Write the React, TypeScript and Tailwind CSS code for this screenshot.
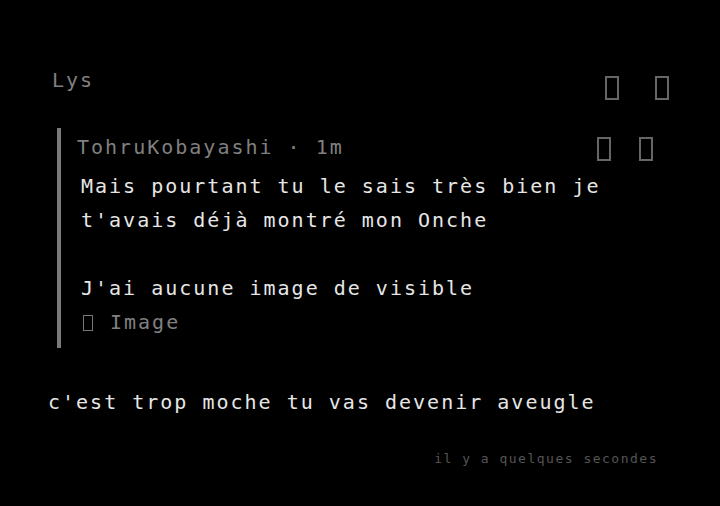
import React from "react";

function Tofu({ big = true }: { big?: boolean }) {
  return big ? (
    <span className="inline-block w-[14px] h-[24px] border-2 border-[#666]" />
  ) : (
    <span className="inline-block w-[10px] h-[16px] border border-[#777]" />
  );
}

export default function App() {
  return (
    <div
      className="w-[720px] h-[506px] bg-black overflow-hidden text-[20px] leading-[34px] tracking-[2px] text-[#e6e6e6]"
      style={{ fontFamily: '"DejaVu Sans Mono", monospace' }}
    >
      <div className="pl-[48px] pr-[51px] pt-[63px]">
        <div className="flex items-start justify-between">
          <span className="ml-[4px] text-[#808080]">Lys</span>
          <div className="flex items-center gap-[36px] mt-[13px]">
            <Tofu />
            <Tofu />
          </div>
        </div>
        <div className="mt-[28px] ml-[9px] mr-[16px] border-l-4 border-[#7a7a7a] pl-[16px] pt-[2px] pb-[9px]">
          <div className="flex items-start justify-between">
            <span className="text-[#808080]">TohruKobayashi · 1m</span>
            <div className="flex items-center gap-[28px] mt-[7px]">
              <Tofu />
              <Tofu />
            </div>
          </div>
          <div className="mt-[5px] pl-[4px]">
            <div>Mais pourtant tu le sais très bien je</div>
            <div>t'avais déjà montré mon Onche</div>
            <div>&nbsp;</div>
            <div>J'ai aucune image de visible</div>
            <div className="text-[#808080] flex items-center gap-[17px]">
              <span className="ml-[2px] mt-[2px] flex">
                <Tofu big={false} />
              </span>
              <span>Image</span>
            </div>
          </div>
        </div>
        <div className="mt-[37px]">c'est trop moche tu vas devenir aveugle</div>
        <div className="mt-[30px] pr-[11px] text-right text-[13px] leading-[20px] tracking-[1.5px] text-[#555]">
          il y a quelques secondes
        </div>
      </div>
    </div>
  );
}
